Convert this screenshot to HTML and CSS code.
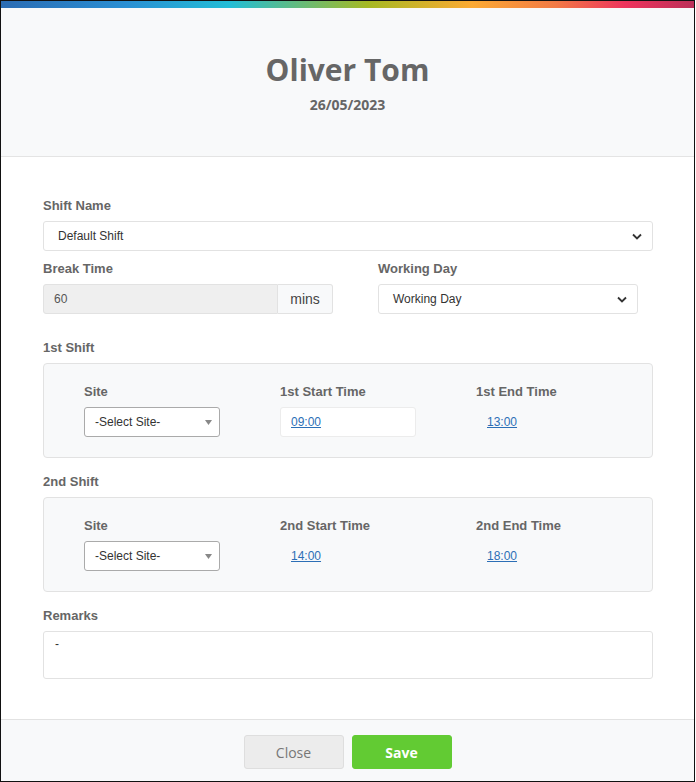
FILE: index.html
```html
<!DOCTYPE html>
<html lang="en">
<head>
  <meta charset="UTF-8" />
  <meta name="viewport" content="width=device-width, initial-scale=1.0"/>
  <title>Shift</title>
  <link rel="stylesheet" href="styles.css">
</head>
<body>

  <div class="modal">

    <!-- header -->
    <div class="modal-header">
      <h2>Oliver Tom</h2>
      <div class="date">26/05/2023</div>
    </div>

    <div class="modal-body">

      <label class="label">Shift Name</label>
      <div class="select">
        <span>Default Shift</span>
        <svg class="chevron" width="10" height="7" viewBox="0 0 10 7"><path d="M1 1.5 L5 5.5 L9 1.5" fill="none" stroke="#333" stroke-width="1.8"/></svg>
      </div>

      <div class="row">
        <div class="col">
          <label class="label">Break Time</label>
          <div class="input-group">
            <div class="input readonly">60</div>
            <div class="addon">mins</div>
          </div>
        </div>
        <div class="col col-right">
          <label class="label">Working Day</label>
          <div class="select">
            <span>Working Day</span>
            <svg class="chevron" width="10" height="7" viewBox="0 0 10 7"><path d="M1 1.5 L5 5.5 L9 1.5" fill="none" stroke="#333" stroke-width="1.8"/></svg>
          </div>
        </div>
      </div>

      <!-- 1st shift -->
      <label class="label">1st Shift</label>
      <div class="panel">
        <div class="panel-col">
          <label class="label">Site</label>
          <div class="site-select">
            <span>-Select Site-</span>
            <svg width="7" height="5" viewBox="0 0 7 5"><path d="M0 0 H7 L3.5 5 Z" fill="#888"/></svg>
          </div>
        </div>
        <div class="panel-col">
          <label class="label">1st Start Time</label>
          <div class="time-box"><a href="#">09:00</a></div>
        </div>
        <div class="panel-col">
          <label class="label">1st End Time</label>
          <div class="time-box plain"><a href="#">13:00</a></div>
        </div>
      </div>

      <!-- 2nd shift -->
      <label class="label">2nd Shift</label>
      <div class="panel">
        <div class="panel-col">
          <label class="label">Site</label>
          <div class="site-select">
            <span>-Select Site-</span>
            <svg width="7" height="5" viewBox="0 0 7 5"><path d="M0 0 H7 L3.5 5 Z" fill="#888"/></svg>
          </div>
        </div>
        <div class="panel-col">
          <label class="label">2nd Start Time</label>
          <div class="time-box plain"><a href="#">14:00</a></div>
        </div>
        <div class="panel-col">
          <label class="label">2nd End Time</label>
          <div class="time-box plain"><a href="#">18:00</a></div>
        </div>
      </div>

      <label class="label">Remarks</label>
      <div class="textarea">-</div>

    </div>

    <!-- footer -->
    <div class="modal-footer">
      <button class="btn btn-close">Close</button>
      <button class="btn btn-save">Save</button>
    </div>

  </div>

</body>
</html>
```

FILE: styles.css
```css
body {
  margin: 0;
  font-family: "Liberation Sans", Arial, sans-serif;
  background-color: #fff;
}

.modal {
  width: 693px;
  height: 780px;
  border: 1px solid #111;
  display: flex;
  flex-direction: column;
  background: #fff;
}

/* header */
.modal-header {
  position: relative;
  background-color: #f8f9fa;
  border-bottom: 1px solid #e4e4e4;
  height: 156px;
  flex-shrink: 0;
  text-align: center;
  font-family: "Open Sans", sans-serif;
  color: #666;
  box-sizing: border-box;
  padding-top: 48px;
}
.modal-header::before {
  content: "";
  position: absolute;
  top: 0;
  left: 0;
  right: 0;
  height: 7px;
  background: linear-gradient(to right, #2b6cb3 0%, #2a8fd3 18%, #22bdd6 33%, #a6b922 53%, #fcaa33 68%, #f27a45 80%, #ee345d 90%, #bc2f58 100%);
}
.modal-header h2 {
  margin: 0;
  font-size: 30px;
  line-height: 42px;
  font-weight: 700;
}
.modal-header .date {
  margin-top: 4px;
  font-size: 14px;
  font-weight: 700;
}

/* body */
.modal-body {
  flex: 1;
  padding: 40px 41px 0 42px;
}

.label {
  display: block;
  font-size: 13px;
  font-weight: 700;
  color: #666;
  line-height: 18px;
  margin-bottom: 6px;
}

.select {
  height: 28px;
  border: 1px solid #e2e2e2;
  border-radius: 3px;
  display: flex;
  align-items: center;
  justify-content: space-between;
  padding: 0 10px 0 14px;
  font-size: 12px;
  color: #333;
  background: #fff;
  margin-bottom: 9px;
}

.row {
  display: flex;
  margin-bottom: 25px;
}
.row .col {
  flex: 0 0 290px;
}
.row .col-right {
  flex: 0 0 260px;
  margin-left: 45px;
}
.row .select {
  margin-bottom: 0;
}

.input-group {
  display: flex;
  height: 30px;
}
.input {
  flex: 1;
  border: 1px solid #e2e2e2;
  border-radius: 3px 0 0 3px;
  display: flex;
  align-items: center;
  padding-left: 10px;
  font-size: 12px;
  color: #555;
}
.input.readonly {
  background-color: #efefef;
}
.addon {
  width: 54px;
  border: 1px solid #e2e2e2;
  border-left: none;
  border-radius: 0 3px 3px 0;
  background-color: #f8f9fa;
  display: flex;
  align-items: center;
  justify-content: center;
  font-size: 14px;
  color: #444;
}

/* shift panels */
.panel {
  background-color: #f8f9fa;
  border: 1px solid #e2e2e2;
  border-radius: 4px;
  display: grid;
  grid-template-columns: 196px 196px 1fr;
  padding: 19px 0 20px 40px;
  margin-bottom: 15px;
}

.site-select {
  height: 28px;
  border: 1px solid #aaa;
  border-radius: 3px;
  background: #fff;
  display: flex;
  align-items: center;
  justify-content: space-between;
  padding: 0 7px 0 10px;
  width: 117px;
  font-size: 12px;
  color: #333;
}

.time-box {
  width: 124px;
  height: 28px;
  border: 1px solid #ececec;
  border-radius: 3px;
  background: #fff;
  display: flex;
  align-items: center;
  padding-left: 10px;
  font-size: 12px;
}
.time-box.plain {
  background: none;
  border-color: transparent;
}
.time-box a {
  color: #2c6fb6;
  text-decoration: underline;
}

.textarea {
  height: 36px;
  border: 1px solid #e2e2e2;
  border-radius: 3px;
  padding: 5px 11px;
  font-size: 12px;
  color: #333;
}

/* footer */
.modal-footer {
  height: 62px;
  flex-shrink: 0;
  box-sizing: border-box;
  background-color: #f8f9fa;
  border-top: 1px solid #e2e2e2;
  display: flex;
  justify-content: center;
  gap: 8px;
  padding-top: 15px;
}
.btn {
  width: 100px;
  height: 34px;
  border-radius: 3px;
  font-family: "Open Sans", sans-serif;
  font-size: 14px;
  cursor: pointer;
}
.btn-close {
  background-color: #ececec;
  border: 1px solid #dedede;
  color: #777;
}
.btn-save {
  background-color: #62cb33;
  border: 1px solid #62cb33;
  color: #fff;
  font-weight: 700;
}
```
